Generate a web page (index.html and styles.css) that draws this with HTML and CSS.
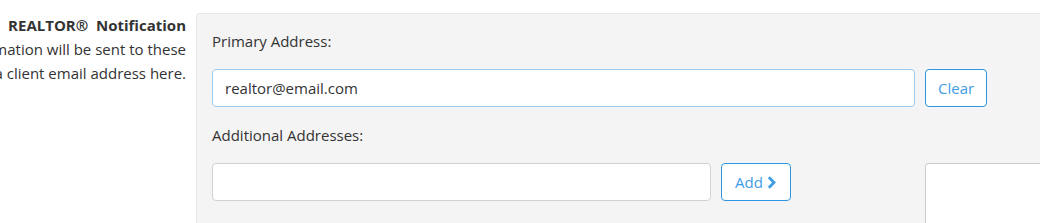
FILE: index.html
```html
<!DOCTYPE html>
<html>
<head>
    <meta charset="UTF-8">
    <title>Notification Addresses</title>
    <link rel="stylesheet" href="styles.css">
</head>
<body>
    <div class="formRow">
        <div class="rowLabel">
            <span class="labelTitle">REALTOR®&nbsp; Notification</span>
            <span>Notification information will be sent to these</span>
            <span>addresses. You may also add a client email address here.</span>
        </div>
        <div class="panel">
            <label class="fieldLabel">Primary Address:</label>
            <div class="fieldRow">
                <input type="text" class="textInput primaryInput" value="realtor@email.com" />
                <button class="outlineButton">Clear</button>
            </div>
            <label class="fieldLabel second">Additional Addresses:</label>
            <div class="fieldRow">
                <div class="addGroup">
                    <input type="text" class="textInput addInput" />
                    <button class="outlineButton addButton">Add
                        <svg class="chevron" viewBox="0 0 9 13" width="9" height="13">
                            <path d="M1.8 1.3 L7 6.5 L1.8 11.7" fill="none" stroke="currentColor" stroke-width="2.8" />
                        </svg>
                    </button>
                </div>
                <div class="addressList"></div>
            </div>
        </div>
    </div>
</body>
</html>
```

FILE: styles.css
```css
body {
    margin: 0;
    font-family: "Open Sans", "Noto Sans", sans-serif;
    font-size: 15px;
    color: #333;
    background-color: white;
    overflow: hidden;
}
.formRow {
    display: flex;
    gap: 10px;
}
.rowLabel {
    width: 186px;
    flex: none;
    display: flex;
    flex-direction: column;
    align-items: flex-end;
    padding-top: 13px;
    line-height: 24px;
    white-space: nowrap;
}
.labelTitle {
    font-weight: bold;
}
.panel {
    flex: 1;
    margin-top: 13px;
    padding: 17px 0 30px 15px;
    background-color: #f4f4f4;
    border: 1px solid #e8e8e8;
    border-right: none;
    border-radius: 4px 0 0 4px;
    height: 180px;
}
.fieldLabel {
    display: block;
    line-height: 20px;
    margin-bottom: 18px;
}
.fieldLabel.second {
    margin-top: 18px;
}
.fieldRow {
    display: flex;
    gap: 10px;
    align-items: flex-start;
}
.textInput {
    box-sizing: border-box;
    height: 38px;
    padding: 0 12px;
    font-family: inherit;
    font-size: 15px;
    color: #333;
    background-color: white;
    border: 1px solid #cfd3d8;
    border-radius: 4px;
    outline: none;
}
.primaryInput {
    width: 703px;
    border-color: #9fcdf0;
}
.addGroup {
    width: 703px;
    display: flex;
    gap: 10px;
}
.addInput {
    width: 499px;
}
.outlineButton {
    box-sizing: border-box;
    height: 38px;
    padding: 0 12px;
    font-family: inherit;
    font-size: 15px;
    color: #3f9de6;
    background-color: white;
    border: 1px solid #2f97e2;
    border-radius: 4px;
}
.addButton {
    display: flex;
    align-items: center;
    gap: 4px;
    padding: 0 14px 0 13px;
}
.chevron {
    margin-top: 1px;
}
.addressList {
    flex: 1;
    height: 100px;
    background-color: white;
    border: 1px solid #cccccc;
    border-right: none;
    border-radius: 4px 0 0 0;
}
```
